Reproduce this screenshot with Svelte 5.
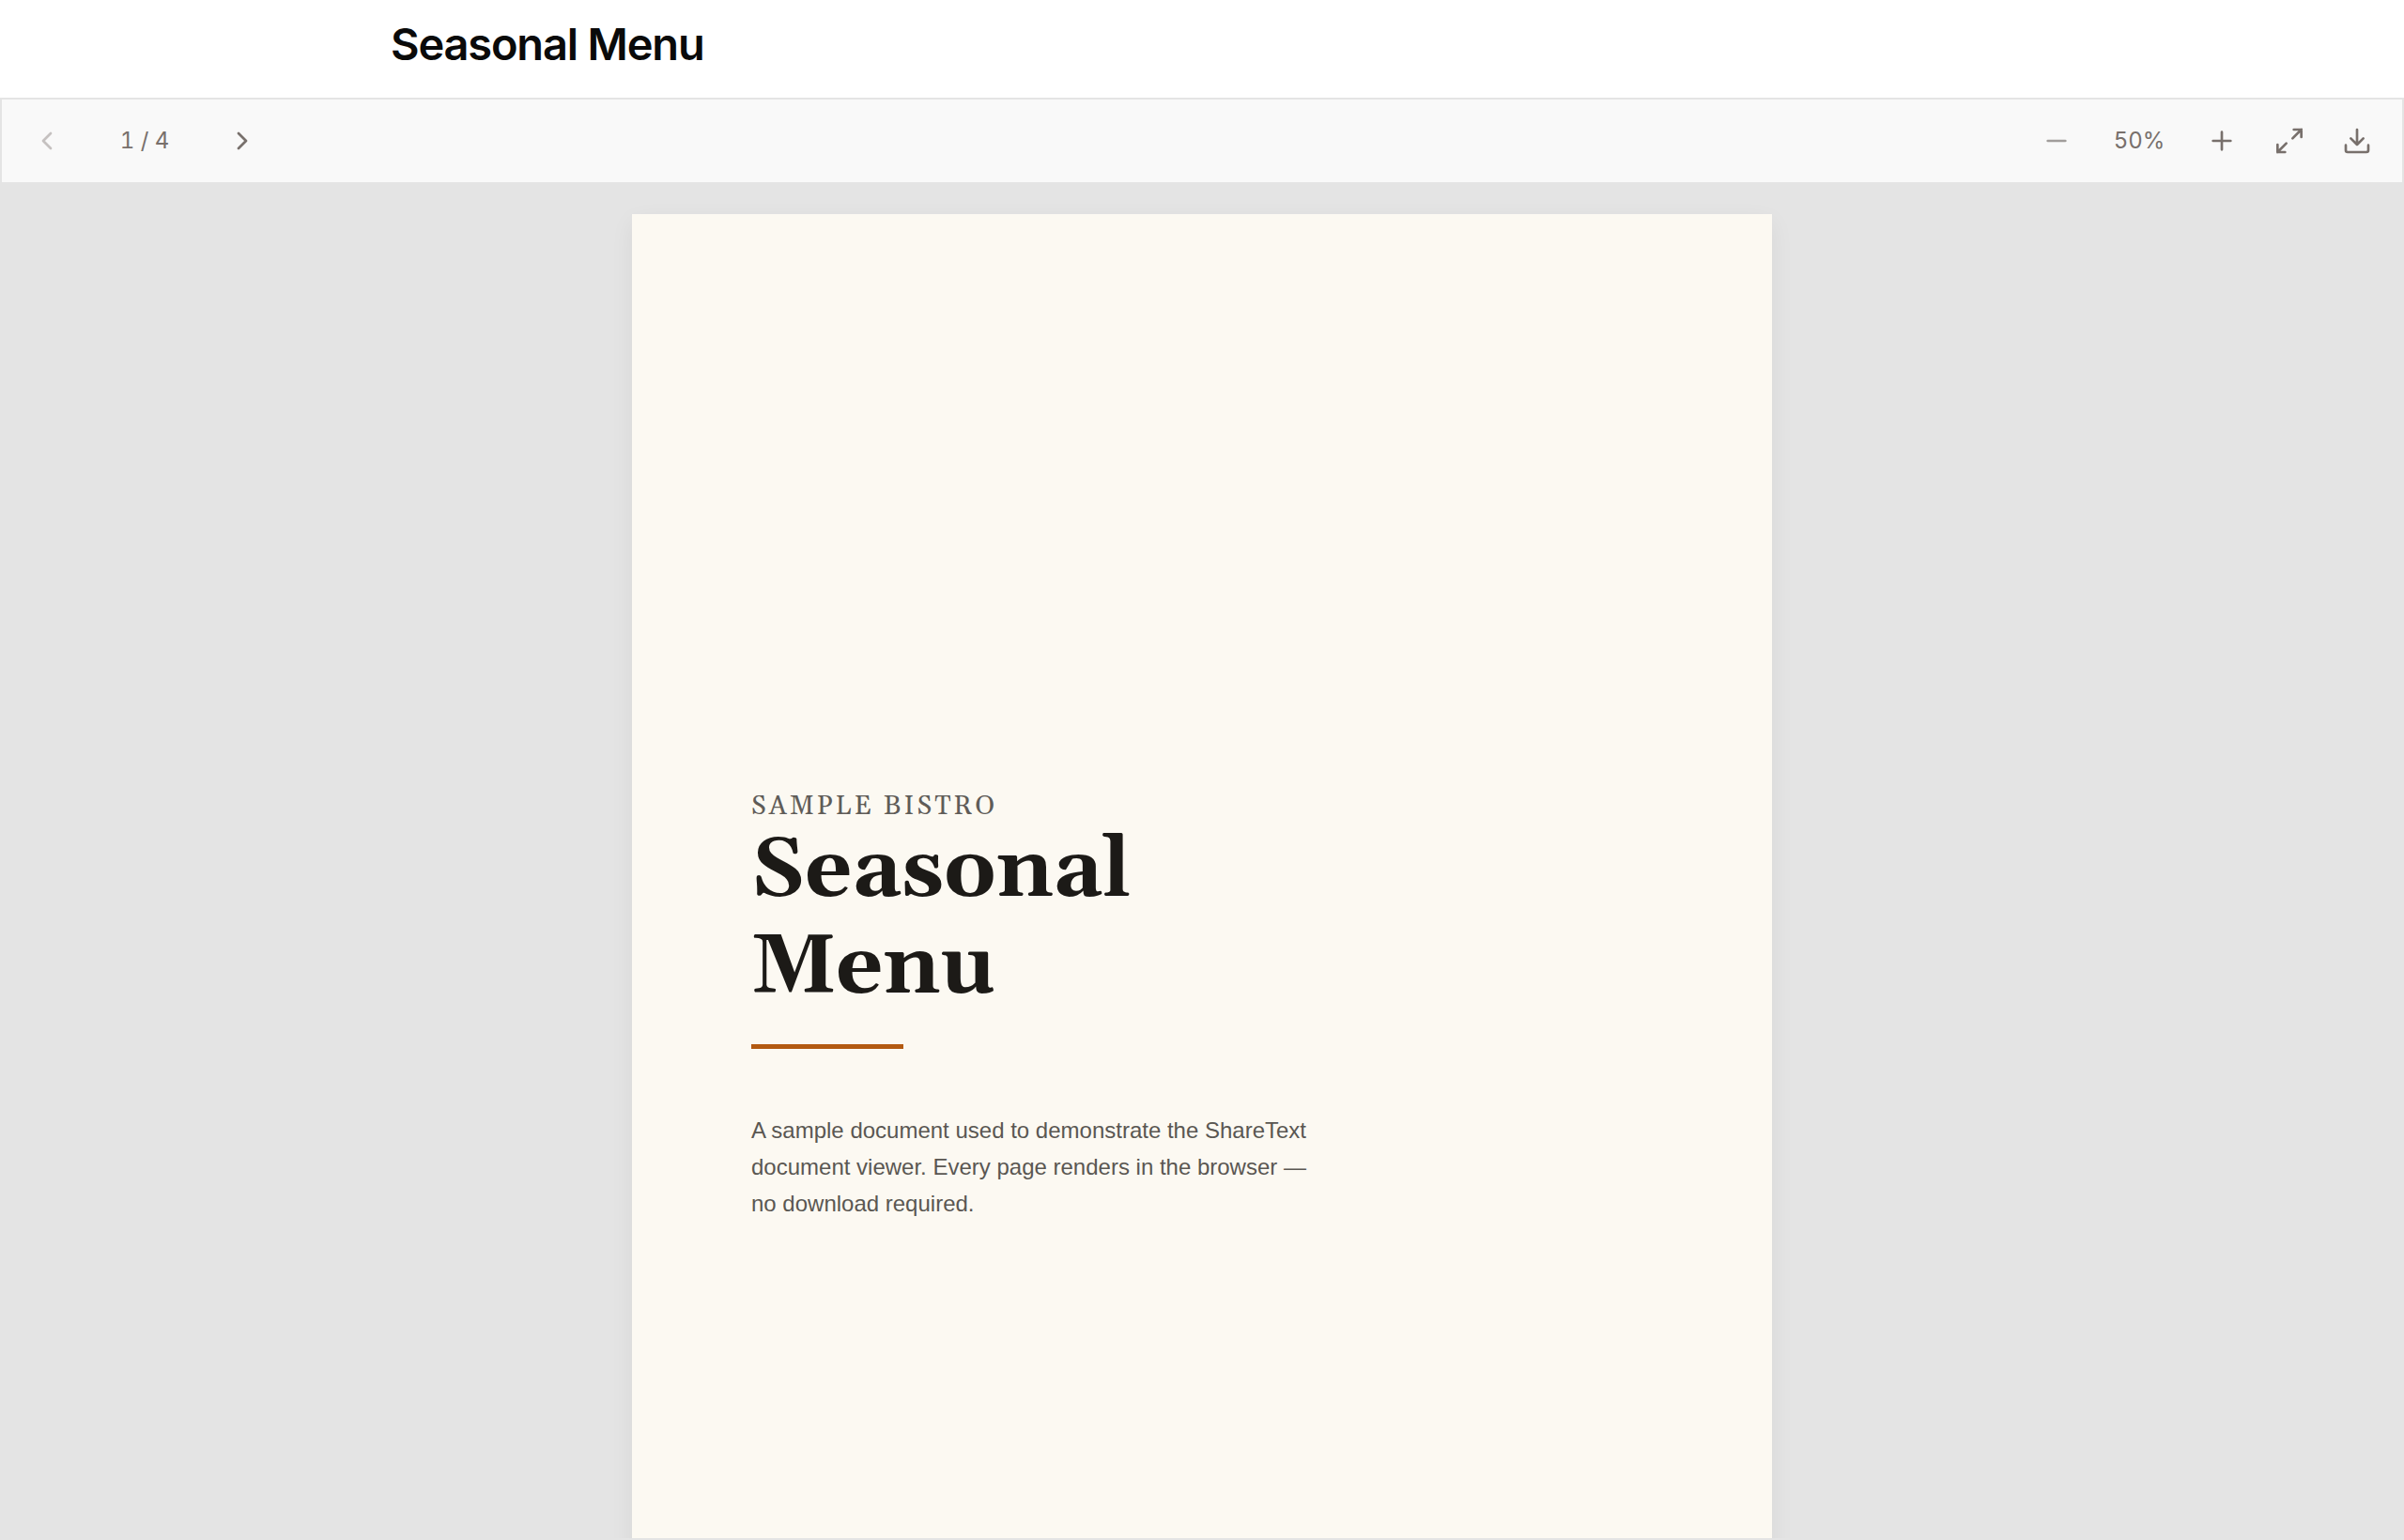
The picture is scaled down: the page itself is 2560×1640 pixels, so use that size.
<script lang="ts">
  const pageCount = 4;
  const minZoom = 50;
  const maxZoom = 200;
  const zoomStep = 25;

  let page = $state(1);
  let zoom = $state(50);

  function goTo(next: number) {
    page = Math.min(pageCount, Math.max(1, next));
  }

  function zoomBy(delta: number) {
    zoom = Math.min(maxZoom, Math.max(minZoom, zoom + delta));
  }
</script>

<div class="app">
  <header>
    <h1>Seasonal Menu</h1>
  </header>

  <main class="viewer">
    <div class="toolbar" role="toolbar" aria-label="Document controls">
      <div class="group">
        <button class="prev" aria-label="Previous page" disabled={page === 1} onclick={() => goTo(page - 1)}>
          <svg viewBox="0 0 24 24"><path d="m15 18-6-6 6-6" /></svg>
        </button>
        <span class="pages">{page} / {pageCount}</span>
        <button aria-label="Next page" disabled={page === pageCount} onclick={() => goTo(page + 1)}>
          <svg viewBox="0 0 24 24"><path d="m9 18 6-6-6-6" /></svg>
        </button>
      </div>

      <div class="group">
        <button class="zoom-out" aria-label="Zoom out" onclick={() => zoomBy(-zoomStep)}>
          <svg viewBox="0 0 24 24"><path d="M5 12h14" /></svg>
        </button>
        <span class="zoom">{zoom}%</span>
        <button aria-label="Zoom in" onclick={() => zoomBy(zoomStep)}>
          <svg viewBox="0 0 24 24"><path d="M5 12h14M12 5v14" /></svg>
        </button>
        <button class="expand" aria-label="Full screen">
          <svg viewBox="0 0 24 24"><path d="M15.5 3h6v6M8.5 21h-6v-6M21.5 3l-7 7M2.5 21l7-7" /></svg>
        </button>
        <button aria-label="Download">
          <svg viewBox="0 0 24 24"><path d="M21 15.500v4a1.500 1.500 0 0 1-1.500 1.500h-15a1.500 1.500 0 0 1-1.500-1.500v-4M7 10l5 5 5-5M12 15V3" /></svg>
        </button>
      </div>
    </div>

    <div class="canvas">
      <article class="sheet">
        <p class="eyebrow">SAMPLE BISTRO</p>
        <h2>Seasonal<br />Menu</h2>
        <hr />
        <p class="intro">
          A sample document used to demonstrate the ShareText document viewer. Every page renders in the browser — no
          download required.
        </p>
      </article>
    </div>
  </main>
</div>

<style>
  :global(body) {
    background: #fff;
  }
  .app {
    display: flex;
    flex-direction: column;
    height: 100vh;
    font-family: Inter, 'Liberation Sans', sans-serif;
  }
  header {
    box-sizing: border-box;
    width: 100%;
    max-width: 1728px;
    margin: 0 auto;
    padding: 15px 0 25px;
  }
  h1 {
    margin: 0;
    font-size: 47px;
    font-weight: 600;
    line-height: 64px;
    letter-spacing: -0.025em;
    color: #0a0a0a;
  }
  .viewer {
    flex: 1;
    min-height: 0;
    display: flex;
    flex-direction: column;
    border: 2px solid #e4e4e4;
  }
  .toolbar {
    display: flex;
    justify-content: space-between;
    padding: 12px 16px;
    background: #f9f9f9;
  }
  .group {
    display: flex;
    align-items: center;
    gap: 8px;
  }
  button {
    display: grid;
    place-items: center;
    width: 64px;
    height: 64px;
    padding: 0;
    border: 0;
    border-radius: 8px;
    background: none;
    color: #78706c;
    cursor: pointer;
  }
  button:hover:enabled {
    background: #eee;
  }
  .prev:disabled {
    opacity: 0.4;
    cursor: default;
  }
  .zoom-out {
    color: #a19d9b;
  }
  svg {
    width: 32px;
    height: 32px;
    fill: none;
    stroke: currentColor;
    stroke-width: 2;
    stroke-linecap: round;
    stroke-linejoin: round;
  }
  .expand svg {
    stroke-linejoin: miter;
  }
  .pages,
  .zoom {
    width: 128px;
    font-size: 24px;
    line-height: 32px;
    font-variant-numeric: tabular-nums;
    text-align: center;
    color: #78706c;
  }
  .zoom {
    width: 96px;
  }
  .canvas {
    flex: 1;
    min-height: 0;
    overflow: hidden;
    padding: 34px 32px 0;
    background: #e4e4e4;
  }
  .sheet {
    box-sizing: border-box;
    width: 100%;
    max-width: 1214px;
    aspect-ratio: 17 / 22;
    margin: 0 auto;
    padding: 615px 127px 0;
    background: #fcf9f2;
    box-shadow: 0 8px 24px rgba(0, 0, 0, 0.06);
  }
  .eyebrow,
  h2 {
    margin: 0;
    font-family: Georgia, Gelasio, 'Liberation Serif', serif;
  }
  .eyebrow {
    font-size: 28px;
    line-height: 32px;
    letter-spacing: 0.11em;
    color: #5f5c58;
  }
  h2 {
    padding-top: 2px;
    font-size: 88px;
    font-weight: 700;
    line-height: 103px;
    color: #1c1a17;
  }
  hr {
    width: 162px;
    height: 5px;
    margin: 29px 0 67px;
    border: 0;
    background: #b35a12;
  }
  .intro {
    max-width: 616px;
    margin: 0;
    font-family: 'Liberation Sans', Arial, sans-serif;
    font-size: 24px;
    line-height: 39px;
    color: #5a5752;
  }
</style>
